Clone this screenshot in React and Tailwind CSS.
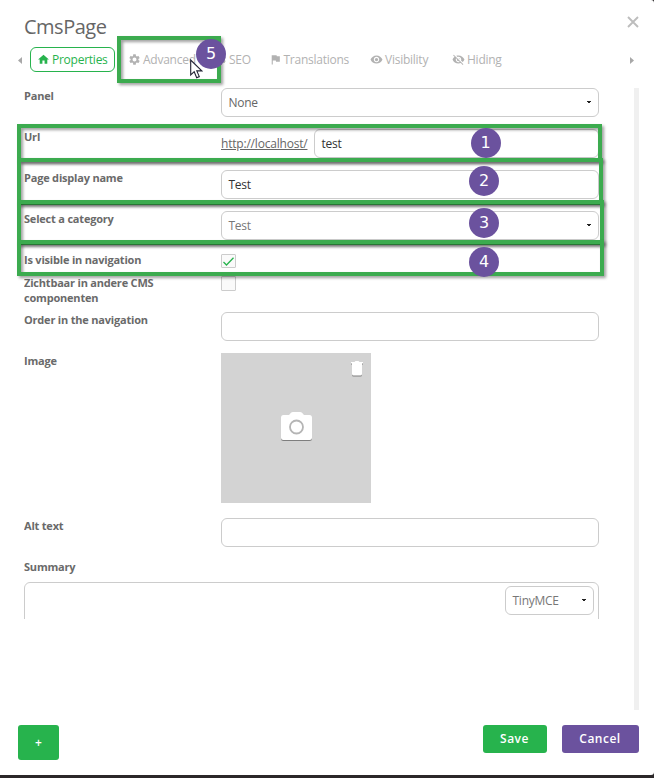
import React from "react";
import { MdHome, MdSettings, MdFlag, MdVisibility, MdVisibilityOff } from "react-icons/md";

function Row({ label, className = "h-[41px]", children }) {
  return (
    <div className={`flex items-start ${className}`}>
      <div className="w-[197px] shrink-0 text-[11px] leading-[15px] font-bold tracking-[-0.2px] text-[#6a6a6a]">{label}</div>
      {children}
    </div>
  );
}

function Arrow() {
  return (
    <svg className="mt-[-1px] h-[2px] w-1 shrink-0" viewBox="0 0 4 2">
      <path d="M0 0h4v1H3v1H1V1H0z" fill="#222" />
    </svg>
  );
}

function Field({ children, select, className = "w-[378px]" }) {
  return (
    <div className={`flex h-[29px] shrink-0 items-center justify-between rounded-[6px] border border-[#cccccc] bg-white pr-[7px] pl-[6.5px] text-[12px] leading-[15px] tracking-[-0.25px] ${className}`}>
      <span>{children}</span>
      {select && <Arrow />}
    </div>
  );
}

function Tab({ icon: Icon, children, className = "" }) {
  return (
    <div className={`flex h-[25px] shrink-0 items-center gap-[2px] text-[12px] tracking-[-0.25px] text-[#b2b2b2] ${className}`}>
      <Icon className="size-[13px] shrink-0" />
      <span className="leading-[17px] whitespace-nowrap">{children}</span>
    </div>
  );
}

function Frame({ className }) {
  return <div className={`absolute border-4 border-[#3cab4f] [filter:drop-shadow(2px_2px_1.5px_rgba(0,0,0,0.38))] ${className}`} />;
}

function Badge({ className, children }) {
  return (
    <div className={`absolute flex size-[30px] items-center justify-center rounded-full bg-[#6b529e] font-['DejaVu_Sans',sans-serif] text-[16px] leading-none font-normal text-white ${className}`}>
      {children}
    </div>
  );
}

export default function App() {
  return (
    <div className="relative h-[778px] w-[654px] overflow-hidden bg-[#2b2829] font-['Open_Sans',sans-serif]">
      <div className="flex h-[775px] flex-col rounded-r-[3px] bg-white">
        <header className="flex h-[47px] items-start justify-between pt-[13px] pr-[15px] pl-6">
          <h1 className="text-[20px] leading-7 tracking-[-0.5px] text-[#666]">CmsPage</h1>
          <svg className="mt-[3px] size-3" viewBox="0 0 12 12" fill="none" stroke="#bdbdbd" strokeWidth="1.9">
            <path d="M1 1l10 10M11 1L1 11" />
          </svg>
        </header>

        <nav className="flex h-[41px] items-start pl-[18px]">
          <svg className="mt-[10px] h-[7px] w-1" viewBox="0 0 4 7"><path d="M4 0v7L0 3.5z" fill="#a8a8a8" /></svg>
          <Tab icon={MdHome} className="ml-2 w-[85px] rounded-[6px] border border-[#27b34d] pl-[6px] !text-[#27b34d]">Properties</Tab>
          <Tab icon={MdSettings} className="ml-[13px] w-[85px]">Advanced</Tab>
          <Tab icon={MdSettings} className="ml-px w-[42px]">SEO</Tab>
          <Tab icon={MdFlag} className="ml-[13px] w-[85px] !gap-[1.5px]">Translations</Tab>
          <Tab icon={MdVisibility} className="ml-[16px] w-[67px]">Visibility</Tab>
          <Tab icon={MdVisibilityOff} className="ml-[15px] w-[56px]">Hiding</Tab>
          <svg className="mt-[10px] mr-[20px] ml-auto h-[7px] w-1" viewBox="0 0 4 7"><path d="M0 0v7l4-3.500z" fill="#a8a8a8" /></svg>
        </nav>

        <div className="mr-[15px] flex h-[622px] justify-between pl-6">
          <div className="h-[531px] w-[575px] overflow-hidden text-[#666]">
            <Row label="Panel"><Field select>None</Field></Row>
            <Row label="Url">
              <a className="w-[93px] shrink-0 pt-[7px] text-[12px] leading-[15px] tracking-[-0.2px] whitespace-nowrap underline">http://localhost/</a>
              <Field className="w-[285px] text-[#333]">test</Field>
            </Row>
            <Row label="Page display name"><Field className="w-[378px] text-[#333]">Test</Field></Row>
            <Row label="Select a category"><Field select className="w-[378px] text-[#777]">Test</Field></Row>
            <Row label="Is visible in navigation" className="h-[23px]">
              <div className="mt-[2px] flex h-[14px] w-[15px] items-center justify-center rounded-[1px] border border-[#ccc] bg-[#fafafa]">
                <svg className="h-[9px] w-[11px]" viewBox="0 0 11 9" fill="none" stroke="#27b34d" strokeWidth="1.3"><path d="M.5 5l3 3L10.500.8" /></svg>
              </div>
            </Row>
            <Row className="h-[37px]" label={<>Zichtbaar in andere CMS<br />componenten</>}>
              <div className="mt-px h-[15px] w-[15px] rounded-[1px] border border-[#ccc] bg-[#fafafa]" />
            </Row>
            <Row label="Order in the navigation"><Field /></Row>
            <Row label="Image" className="h-[165px]">
              <div className="flex h-[150px] w-[150px] flex-col bg-[#d3d3d3]">
                <svg className="mt-2 mr-2 ml-auto h-[15px] w-[12px] overflow-visible drop-shadow-[0.5px_1px_0.5px_rgba(0,0,0,0.4)]" viewBox="0 0 12 15">
                  <path d="M0 1h3.500l1-1h3l1 1H12v1.500H0zM1 2h10v11q0 1.500-1.500 1.500h-7Q1 14.500 1 13z" fill="#fff" />
                </svg>
                <svg className="mx-auto mt-[36px] h-[28px] w-[31px] overflow-visible drop-shadow-[0.7px_1px_0.5px_rgba(0,0,0,0.4)]" viewBox="0 0 31 28">
                  <path d="M2.500 3H8l2-2.200Q10.600 0 12 0h7q1.400 0 2 .8L23 3h5.500Q31 3 31 5.500v20q0 2.500-2.500 2.500h-26Q0 28 0 25.500v-20Q0 3 2.500 3z" fill="#fff" />
                  <circle cx="15.500" cy="15" r="6.500" fill="#fff" stroke="#b5b5b5" strokeWidth="1.800" />
                </svg>
              </div>
            </Row>
            <Row label="Alt text"><Field /></Row>
            <Row label="Summary" className="h-[23px]" />
            <div className="flex h-[60px] justify-end rounded-[6px] border border-[#ccc] pt-[3px] pr-1">
              <Field select className="w-[89px] text-[#777]">TinyMCE</Field>
            </div>
          </div>
          <div className="w-[5px] bg-[#f0f0f0]" />
        </div>

        <footer className="flex items-start pt-[15px] pr-[15px] pl-[18px] text-[12px] font-semibold text-white">
          <button className="h-[35px] w-[41px] rounded-[3px] bg-[#27b34d]">+</button>
          <button className="ml-auto h-[28px] w-[64px] rounded-[3px] bg-[#27b34d] pr-px tracking-[0.5px]">Save</button>
          <button className="ml-[15px] h-[28px] w-[77px] rounded-[3px] bg-[#6b529e] pr-px tracking-[0.5px]">Cancel</button>
        </footer>
      </div>

      <Frame className="top-[124px] left-[17px] h-[38px] w-[585px]" />
      <Frame className="top-[158px] left-[17px] h-[47px] w-[586px]" />
      <Frame className="top-[200px] left-[17px] h-[45px] w-[587px]" />
      <Frame className="top-[240px] left-[17px] h-[36px] w-[587px]" />
      <Frame className="top-[36px] left-[117px] h-[47px] w-[104px]" />
      <Badge className="top-[128px] left-[471px] pr-px">1</Badge>
      <Badge className="top-[166px] left-[469px]">2</Badge>
      <Badge className="top-[208px] left-[469px]">3</Badge>
      <Badge className="top-[247px] left-[469px]">4</Badge>
      <Badge className="top-[39px] left-[196px]">5</Badge>
      <svg className="absolute top-[59px] left-[190px] h-[20px] w-[13px]" viewBox="0 0 13 20">
        <path d="M.7 1v15l3.500-3.300 2.500 6 2.600-1.100-2.500-5.700h5z" fill="#fff" stroke="#223" strokeWidth="1.100" />
      </svg>
    </div>
  );
}
